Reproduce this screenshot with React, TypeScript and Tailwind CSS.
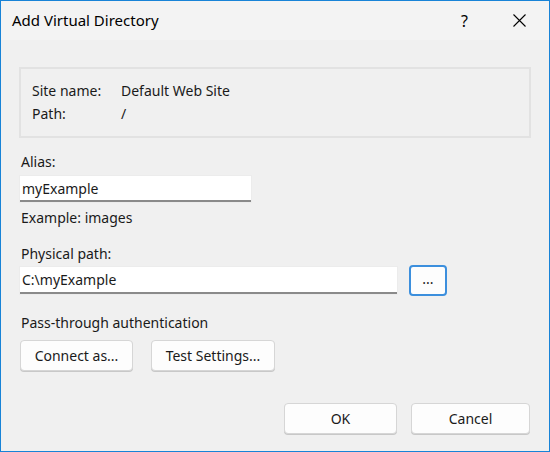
import React from "react";

const font = { fontFamily: '"Segoe UI", "Noto Sans", "Open Sans", sans-serif' };

function Btn({ children, w }: { children: React.ReactNode; w: string }) {
  return (
    <button
      className={`h-[31px] ${w} rounded-[4px] border border-[#d6d6d6] bg-[#fdfdfd] text-[14px] text-[#1a1a1a] shadow-[0_1px_0_#c8c8c8] flex items-center justify-center`}
    >
      {children}
    </button>
  );
}

export default function App() {
  return (
    <div
      className="w-[550px] h-[452px] border border-[#1883d7] bg-[#f0f0f0] flex flex-col text-[14px] text-[#1a1a1a] overflow-hidden"
      style={font}
    >
      <div className="h-[39px] bg-[#f3f3f3] flex items-center pl-[11px] shrink-0">
        <span className="text-[15px] text-black">Add Virtual Directory</span>
        <span className="ml-auto mr-[45px] text-[16px] text-black">?</span>
        <svg width="13" height="13" viewBox="0 0 13 13" className="mr-[23px]">
          <path d="M0.5 0.5L12.5 12.5M12.5 0.5L0.5 12.5" stroke="#000" strokeWidth="1.1" />
        </svg>
      </div>
      <div className="flex flex-col px-[18px]">
        <div className="mt-[27px] h-[71px] border-2 border-[#e2e2e2] flex flex-col justify-center gap-[3px] pl-[11px] pb-[2px]">
          <div className="flex h-[20px] items-center">
            <span className="w-[89px]">Site name:</span>
            <span>Default Web Site</span>
          </div>
          <div className="flex h-[20px] items-center">
            <span className="w-[89px]">Path:</span>
            <span>/</span>
          </div>
        </div>
        <div className="mt-[13px] ml-[2px] h-[20px] flex items-center">Alias:</div>
        <div className="mt-[5px] ml-[1px] w-[231px] h-[26px] bg-white border-b-2 border-[#8a8a8a] flex items-center pl-[2px] shadow-[0_0_0_1px_#ececec]">
          myExample
        </div>
        <div className="mt-[5px] ml-[2px] h-[20px] flex items-center">Example: images</div>
        <div className="mt-[16px] ml-[2px] h-[20px] flex items-center">Physical path:</div>
        <div className="mt-[2px] flex items-center">
          <div className="ml-[1px] w-[377px] h-[27px] bg-white border-b-2 border-[#8a8a8a] flex items-center pl-[2px] shadow-[0_0_0_1px_#ececec]">
            C:\myExample
          </div>
          <button className="ml-[12px] w-[38px] h-[31px] rounded-[4px] border-2 border-[#3c8fdd] bg-[#fdfdfd] flex items-center justify-center text-[14px] leading-none pb-[4px]">
            ...
          </button>
        </div>
        <div className="mt-[16px] ml-[2px] h-[20px] flex items-center">Pass-through authentication</div>
        <div className="mt-[8px] ml-[1px] flex gap-[18px]">
          <Btn w="w-[113px]">Connect as...</Btn>
          <Btn w="w-[124px]">Test Settings...</Btn>
        </div>
        <div className="mt-[32px] flex justify-end gap-[14px] pr-[1px]">
          <Btn w="w-[113px]">OK</Btn>
          <Btn w="w-[119px]">Cancel</Btn>
        </div>
      </div>
    </div>
  );
}
